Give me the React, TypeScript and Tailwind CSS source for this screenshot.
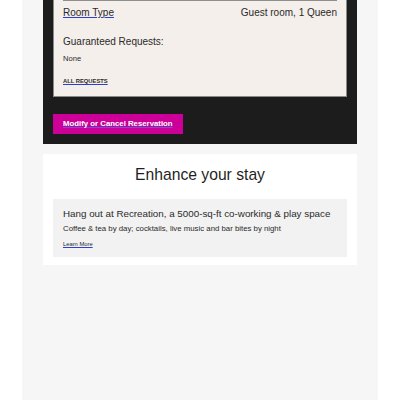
import React from "react";

export default function App() {
  const font = { fontFamily: '"Liberation Sans", Arial, sans-serif' };
  return (
    <div className="min-h-[400px] bg-white" style={font}>
      <div className="mx-[22px] min-h-[400px] bg-[#f6f6f6]">
        <div className="mx-[21px] bg-[#1c1c1c] px-[10px] pb-[10px]">
          <div className="border border-t-0 border-[#8a8a8a] bg-[#f4efeb] px-[9px] pb-[11px] text-[#2a2a2a]">
            <div className="flex justify-between border-t border-[#8f8f8f] pt-[6px] text-[10px] leading-[12px]">
              <span className="underline decoration-[#2b3fd6] underline-offset-[1px]">Room Type</span>
              <span>Guest room, 1 Queen</span>
            </div>
            <div className="mt-[17px] text-[10px] leading-[12px]">Guaranteed Requests:</div>
            <div className="mt-[6px] text-[7.6px] leading-[10px]">None</div>
            <div className="mt-[13px] text-[5.8px] font-bold leading-[8px] underline decoration-[#2b3fd6]">ALL REQUESTS</div>
          </div>
          <div className="mt-[17px] flex h-[20px] w-[130px] items-center bg-[#cc0099] px-[10px]">
            <span className="text-[7.8px] font-bold leading-[10px] text-white underline decoration-[#5b5bd6]">
              Modify or Cancel Reservation
            </span>
          </div>
        </div>
        <div className="mx-[21px] mt-[10px] bg-white px-[10px] pt-[11px] pb-[8px]">
          <div className="text-center text-[15.7px] leading-[20px] text-[#1f1f1f]">Enhance your stay</div>
          <div className="mt-[14px] bg-[#f2f2f2] px-[10px] pt-[9px] pb-[9px] text-[#2a2a2a]">
            <div className="text-[9.8px] leading-[12px]">Hang out at Recreation, a 5000-sq-ft co-working &amp; play space</div>
            <div className="mt-[4px] text-[7.8px] leading-[10px]">Coffee &amp; tea by day; cocktails, live music and bar bites by night</div>
            <div className="mt-[6px] text-[5.8px] leading-[8px] underline decoration-[#2b3fd6]">Learn More</div>
          </div>
        </div>
      </div>
    </div>
  );
}
